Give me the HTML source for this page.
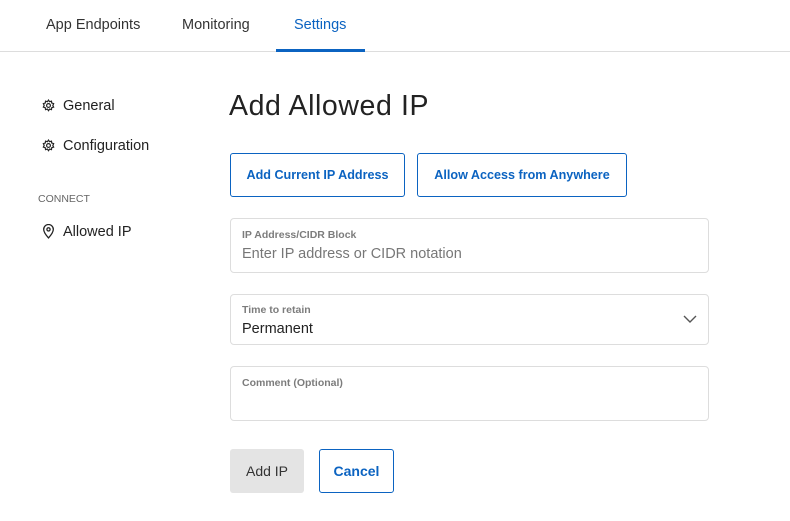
<!DOCTYPE html>
<html><head><style>
*{box-sizing:border-box;margin:0;padding:0}
body{width:790px;height:521px;background:#fff;font-family:"Liberation Sans",sans-serif;color:#222;position:relative;overflow:hidden}
.a{position:absolute}
.tab{position:absolute;top:17px;font-size:14.5px;color:#333}
.nav{position:absolute;left:63px;font-size:14.5px;color:#222}
.ic{position:absolute;left:42px}
.btn{position:absolute;border:1px solid #0b63c1;border-radius:3px;color:#0b63c1;font-size:12.6px;font-weight:bold;display:flex;align-items:center;justify-content:center}
.fld{position:absolute;left:230px;width:479px;border:1px solid #ddd;border-radius:4px}
.lbl{position:absolute;left:11px;font-size:10.5px;color:#666;font-weight:bold;opacity:.85}
</style></head><body>
<div class="tab" style="left:46px">App Endpoints</div>
<div class="tab" style="left:182px">Monitoring</div>
<div class="tab" style="left:294px;color:#0b63c1">Settings</div>
<div class="a" style="left:0;top:51px;width:790px;height:1px;background:#ddd"></div>
<div class="a" style="left:276px;top:49px;width:89px;height:3px;background:#0b63c1"></div>

<svg class="ic" style="top:99px" width="13" height="13" viewBox="0 0 24 24" fill="none" stroke="#222" stroke-width="2.2"><circle cx="12" cy="12" r="3.5"/><path d="M12 2l2 3 3.5-1 .5 3.5 3.5 1-1.5 3.5 1.5 3-3.5 1-.5 3.5-3.5-1-2 3-2-3-3.5 1-.5-3.5-3.5-1 1.5-3.5L2.5 8.5 6 7.5 6.5 4 10 5z"/></svg>
<div class="nav" style="top:98px">General</div>
<svg class="ic" style="top:139px" width="13" height="13" viewBox="0 0 24 24" fill="none" stroke="#222" stroke-width="2.2"><circle cx="12" cy="12" r="3.5"/><path d="M12 2l2 3 3.5-1 .5 3.5 3.5 1-1.5 3.5 1.5 3-3.5 1-.5 3.5-3.5-1-2 3-2-3-3.5 1-.5-3.5-3.5-1 1.5-3.5L2.5 8.5 6 7.5 6.5 4 10 5z"/></svg>
<div class="nav" style="top:138px">Configuration</div>
<div class="a" style="left:38px;top:193px;font-size:10.5px;color:#666">CONNECT</div>
<svg class="ic" style="top:224px" width="13" height="15" viewBox="0 0 24 28" fill="none" stroke="#222" stroke-width="2.4"><path d="M12 26C12 26 3 16 3 10a9 9 0 0 1 18 0c0 6-9 16-9 16z"/><circle cx="12" cy="10" r="3"/></svg>
<div class="nav" style="top:224px">Allowed IP</div>

<div class="a" style="left:229px;top:90px;font-size:28.5px;color:#222;letter-spacing:0.6px">Add Allowed IP</div>
<div class="btn" style="left:230px;top:153px;width:175px;height:44px">Add Current IP Address</div>
<div class="btn" style="left:417px;top:153px;width:210px;height:44px">Allow Access from Anywhere</div>

<div class="fld" style="top:218px;height:55px"><div class="lbl" style="top:10px">IP Address/CIDR Block</div><div class="a" style="left:11px;top:27px;font-size:14.5px;color:#777">Enter IP address or CIDR notation</div></div>
<div class="fld" style="top:294px;height:51px"><div class="lbl" style="top:9px">Time to retain</div><div class="a" style="left:11px;top:26px;font-size:14.5px;color:#222">Permanent</div>
<svg class="a" style="left:452px;top:20px" width="14" height="9" viewBox="0 0 14 9" fill="none" stroke="#555" stroke-width="1.4"><path d="M1 1l6 6 6-6"/></svg></div>
<div class="fld" style="top:366px;height:55px"><div class="lbl" style="top:10px">Comment (Optional)</div></div>

<div class="a" style="left:230px;top:449px;width:74px;height:44px;background:#e4e4e4;border-radius:3px;font-size:14px;color:#333;display:flex;align-items:center;justify-content:center">Add IP</div>
<div class="btn" style="left:319px;top:449px;width:75px;height:44px;font-size:14px">Cancel</div>
</body></html>
